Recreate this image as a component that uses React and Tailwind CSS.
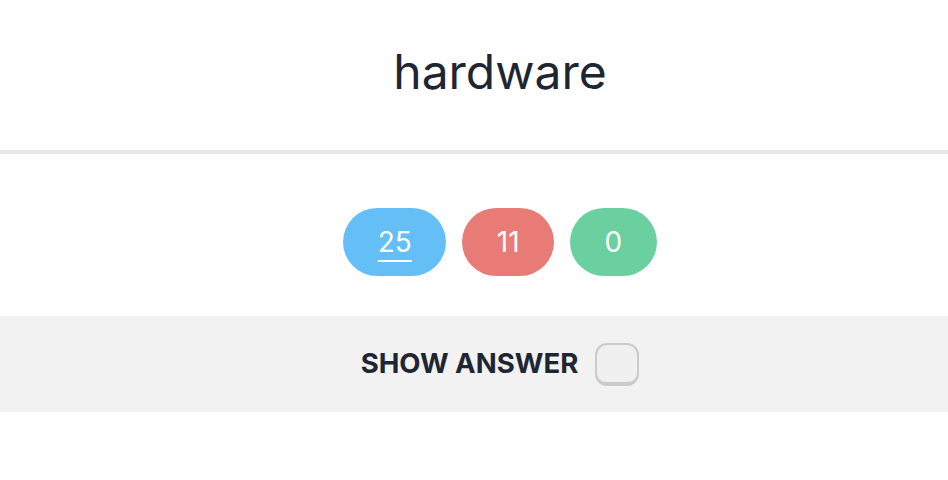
export default function App() {
    const counts = [
        { value: 25, bg: "bg-[#63bff5]", active: true },
        { value: 11, bg: "bg-[#e87b76]", active: false },
        { value: 0, bg: "bg-[#6bd09f]", active: false },
    ];

    return (
        <div className="w-[948px] h-[480px] bg-white font-['Inter',sans-serif] text-[#1f2633]">
            <div className="flex h-[150px] items-center justify-center pb-[6px] pl-[52px]">
                <h1 className="text-[48px] leading-none font-normal">hardware</h1>
            </div>
            <div className="h-[4px] bg-[#e8e8e8]" />

            <div className="flex justify-center gap-4 pt-[54px] pb-[40px] pl-[52px]">
                {counts.map((c) => (
                    <div
                        key={c.value}
                        className={`${c.bg} flex h-[68px] items-center rounded-full px-[34.5px] text-[28px] leading-none text-white`}
                    >
                        <span className={c.active ? "underline decoration-2 underline-offset-[8px]" : ""}>
                            {c.value}
                        </span>
                    </div>
                ))}
            </div>

            <div className="flex h-[96px] items-center justify-center gap-[17px] bg-[#f2f2f2] pl-[52px]">
                <span className="text-[27.6px] font-bold uppercase leading-none">Show answer</span>
                <div className="h-[43px] w-[44px] rounded-[12px] border-2 border-b-4 border-[#cbcbcd] bg-[#f0f0f0]" />
            </div>
        </div>
    );
}
